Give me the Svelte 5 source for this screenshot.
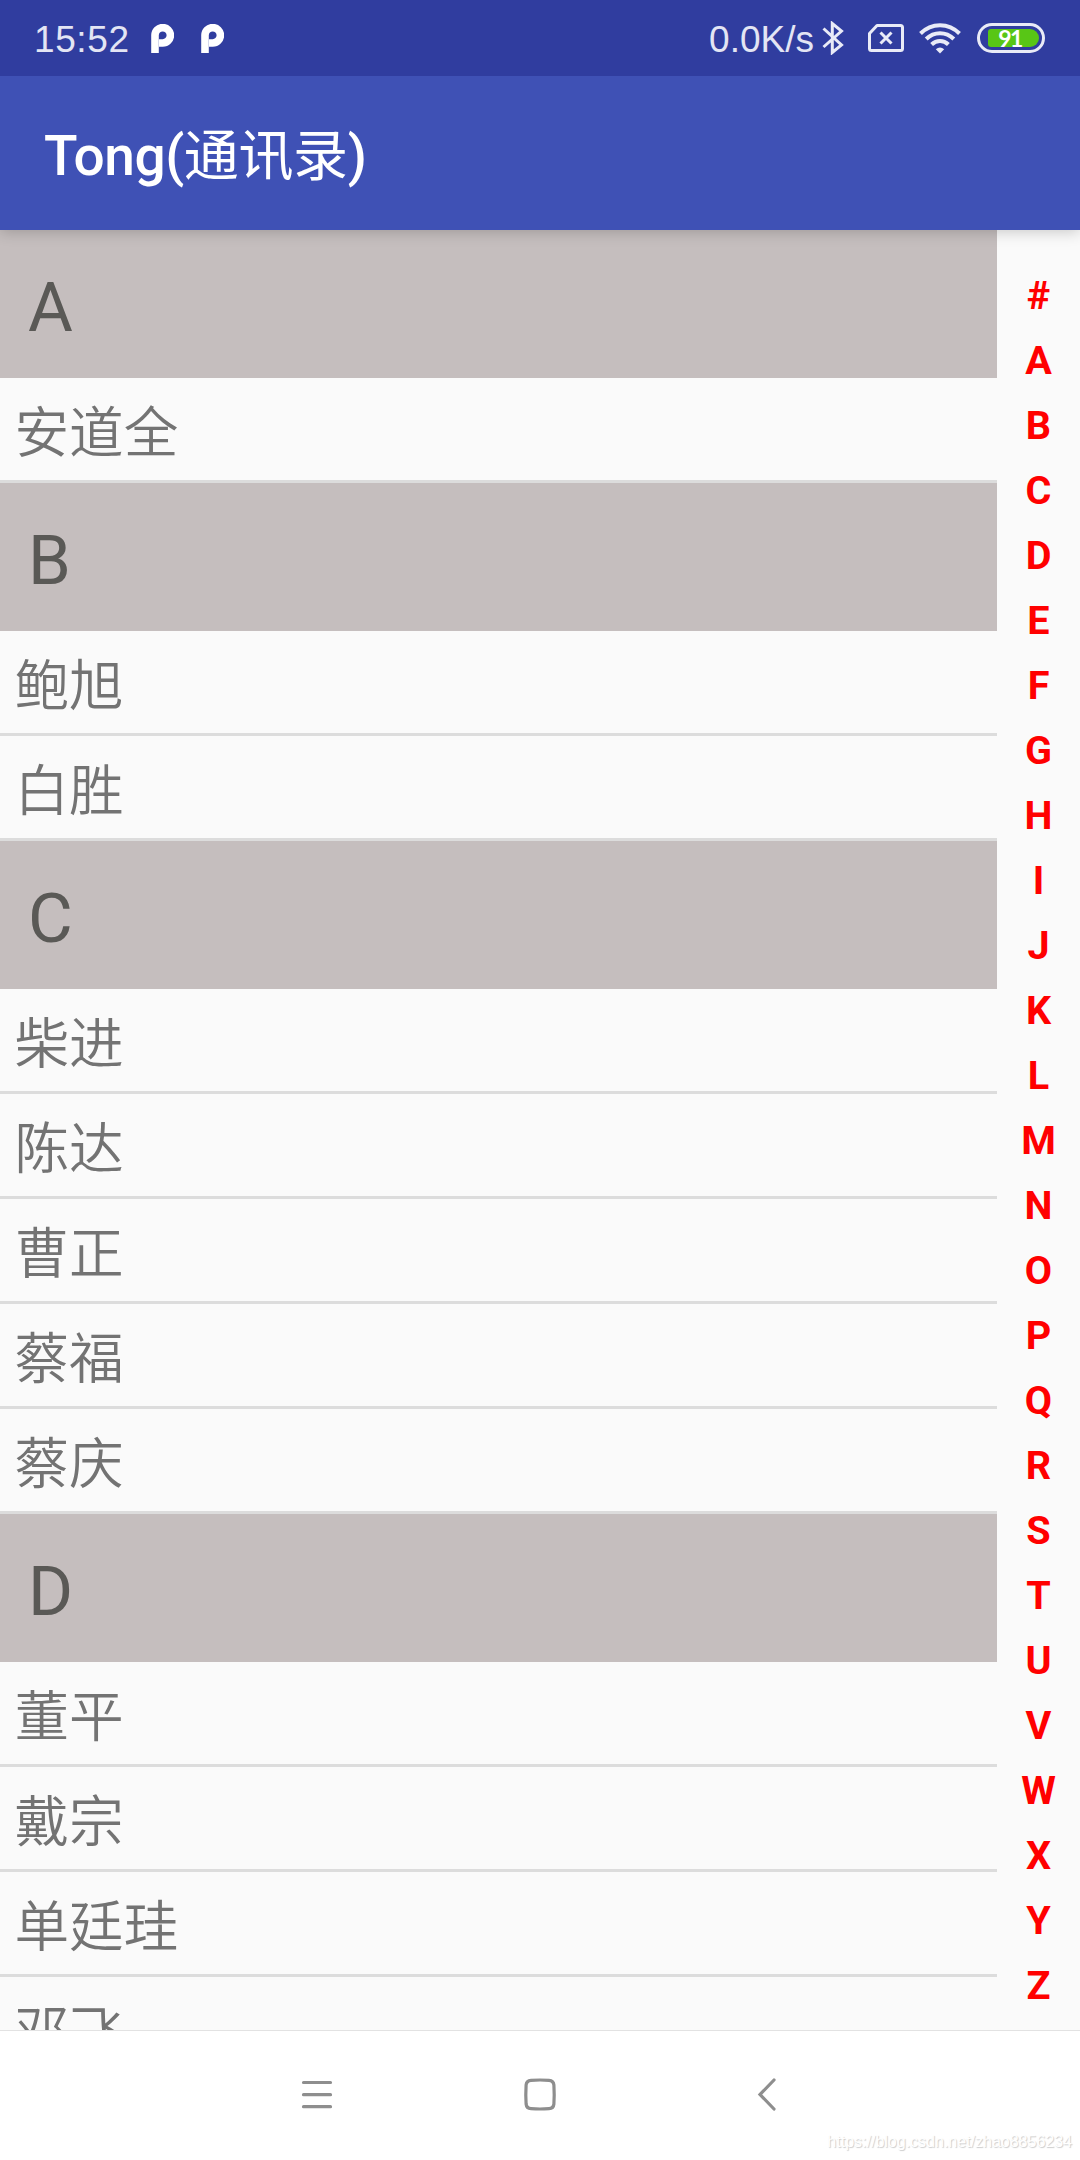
<script>
	const groups = [
		{ letter: 'A', names: ['安道全'] },
		{ letter: 'B', names: ['鲍旭', '白胜'] },
		{ letter: 'C', names: ['柴进', '陈达', '曹正', '蔡福', '蔡庆'] },
		{ letter: 'D', names: ['董平', '戴宗', '单廷珪', '邓飞'] }
	];
	const letters = '#ABCDEFGHIJKLMNOPQRSTUVWXYZ'.split('');
</script>

<div class="phone">
	<header class="status">
		<span class="time">15:52</span>
		{#each [1, 2] as n (n)}
			<svg class="app-icon" width="23" height="29" viewBox="0 0 23 29">
				<path d="M4 29V11.5A7.7 7.7 0 1 1 11.5 19H8" fill="none" stroke="#fff" stroke-width="7.6" />
			</svg>
		{/each}
		<span class="speed">0.0K/s</span>
		<svg class="bluetooth" width="22" height="34" viewBox="0 0 22 34">
			<path d="M1.5 7.5L19.5 24L10.3 31.5V2.5L19.5 10L1.5 26" fill="none" stroke="#e9ebf7" stroke-width="3" />
		</svg>
		<svg class="sim" width="36" height="28" viewBox="0 0 36 28">
			<path d="M9 1.5H32.5a2 2 0 0 1 2 2V24.5a2 2 0 0 1-2 2H3.5a2 2 0 0 1-2-2V9.5Z" fill="none" stroke="#e9ebf7" stroke-width="3" stroke-linejoin="round" />
			<path d="M12.5 8.5L23.5 19.5M23.5 8.5L12.5 19.5" stroke="#e9ebf7" stroke-width="3" />
		</svg>
		<svg class="wifi" width="42" height="31" viewBox="0 0 42 31">
			<g fill="none" stroke="#e9ebf7" stroke-width="4">
				<path d="M1.5 10.5C12.5-.6 29.5-.6 40.5 10.5" />
				<path d="M7.2 16C15 8.2 27 8.2 34.8 16" />
				<path d="M12.6 21.5C17.5 16.8 24.5 16.8 29.4 21.5" />
			</g>
			<path d="M16.8 26.3Q21 22.5 25.2 26.3L21 30.5Z" fill="#e9ebf7" />
		</svg>
		<div class="battery">
			<span class="charge">91</span>
		</div>
	</header>

	<div class="app-bar">
		<h1>Tong(<span>通讯录</span>)</h1>
	</div>

	<main>
		<div class="list">
			{#each groups as group (group.letter)}
				<h2>{group.letter}</h2>
				{#each group.names as name (name)}
					<div class="item">{name}</div>
				{/each}
			{/each}
		</div>
		<div class="index">
			{#each letters as letter (letter)}
				<span>{letter}</span>
			{/each}
		</div>
	</main>

	<nav>
		<svg width="34" height="34" viewBox="0 0 34 34">
			<path d="M3.5 4.5H30.5M3.5 16.7H30.5M3.5 28.7H30.5" />
		</svg>
		<svg width="34" height="34" viewBox="0 0 34 34">
			<path d="M8 2.3Q17 1.7 26 2.3Q30.5 2.6 30.9 7Q31.5 17 30.9 26Q30.5 30.4 26 30.7Q17 31.3 8 30.7Q3.5 30.4 3.1 26Q2.5 17 3.1 7Q3.5 2.6 8 2.3Z" />
		</svg>
		<svg width="34" height="34" viewBox="0 0 34 34">
			<path d="M28 2L14 16.5L28 31" />
		</svg>
		<span class="watermark">https://blog.csdn.net/zhao8856234</span>
	</nav>
</div>

<style>
	:global(body) { background: #fafafa; }
	.phone {
		display: flex;
		flex-direction: column;
		width: 1080px;
		height: 2160px;
		overflow: hidden;
		background: #fafafa;
		font-family: Roboto, 'Noto Sans CJK SC', sans-serif;
	}
	.status {
		display: flex;
		align-items: center;
		flex: none;
		position: relative;
		z-index: 2;
		box-sizing: border-box;
		height: 76px;
		padding: 0 35px 0 34px;
		background: #303d9f;
		color: #e3e5f4;
		font: 37px 'Liberation Sans', sans-serif;
		white-space: nowrap;
	}
	.status svg { flex: none; }
	.time {
		width: 117px;
		padding-top: 4px;
		letter-spacing: 0.6px;
	}
	.app-icon { margin-right: 27px; }
	.speed {
		margin-left: auto;
		padding-top: 4px;
	}
	.bluetooth { margin-left: 8px; }
	.sim { margin-left: 24px; }
	.wifi { margin-left: 15px; }
	.battery {
		box-sizing: border-box;
		width: 68px;
		height: 30px;
		margin-left: 16px;
		padding: 3px;
		border: 3px solid #e9ebf7;
		border-radius: 15px;
	}
	.charge {
		display: block;
		width: 51px;
		height: 18px;
		margin-left: 5px;
		border-radius: 3px 9px 9px 3px;
		background: #58c616;
		color: #fff;
		font: 700 23px/19px Lato, sans-serif;
		letter-spacing: -1.5px;
		text-align: center;
		text-indent: -7px;
	}
	.app-bar {
		display: flex;
		align-items: center;
		flex: none;
		position: relative;
		z-index: 1;
		box-sizing: border-box;
		height: 154px;
		padding: 6px 0 0 44px;
		background: #3f51b5;
		box-shadow: 0 2px 14px rgba(0, 0, 0, 0.2);
	}
	h1 {
		margin: 0;
		color: #fff;
		font-size: 55px;
		font-weight: 500;
		line-height: 64px;
		letter-spacing: -0.4px;
	}
	h1 span { font-weight: 400; }
	main {
		display: flex;
		flex: none;
		height: 1800px;
		overflow: hidden;
	}
	.list { width: 997px; }
	h2 {
		margin: 0;
		padding-left: 28px;
		background: #c5bebe;
		color: #5a5956;
		font-size: 68.75px;
		font-weight: 400;
		line-height: 156px;
		height: 148px;
	}
	.item {
		height: 102px;
		padding-left: 14.5px;
		border-bottom: 3px solid #dcdcdc;
		color: #737373;
		font-size: 54.6px;
		font-weight: 350;
		line-height: 110px;
	}
	.index {
		display: flex;
		flex-direction: column;
		width: 83px;
		padding-top: 33px;
		color: red;
		font-size: 39.6px;
		font-weight: 700;
		line-height: 65px;
		text-align: center;
	}
	nav {
		display: flex;
		justify-content: space-between;
		position: relative;
		box-sizing: border-box;
		height: 130px;
		padding: 47px 300px 0;
		border-top: 1px solid #e2e2e2;
		background: #fff;
	}
	nav path {
		fill: none;
		stroke: #8e8e8e;
		stroke-width: 3.2;
		stroke-linecap: round;
	}
	.watermark {
		position: absolute;
		right: 8px;
		bottom: 8px;
		color: #fff;
		font: 16px/20px 'Liberation Sans', sans-serif;
		text-shadow: 1px 1px 1px #ccc;
	}
</style>
